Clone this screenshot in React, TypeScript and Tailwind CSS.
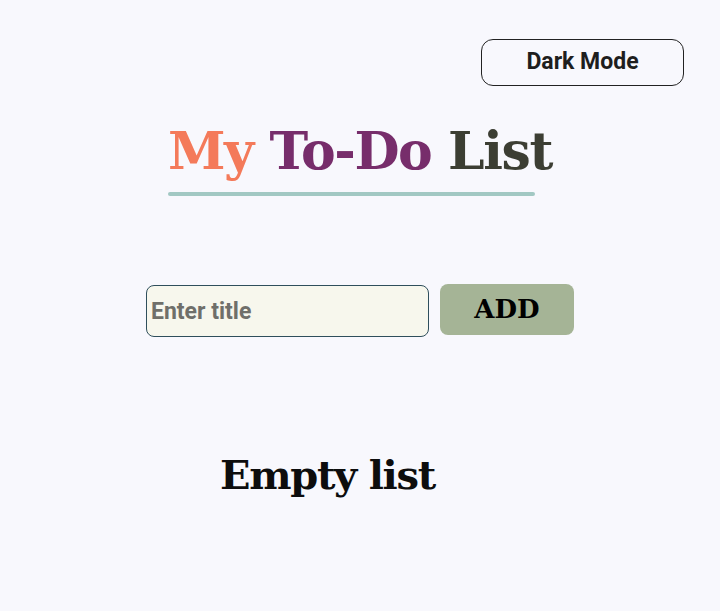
export default function App() {
  return (
    <div className="min-h-[611px] w-full bg-[#f8f8fd] flex flex-col">
      <div className="flex justify-end pt-[39px] pr-[36px]">
        <button className="w-[203px] h-[47px] rounded-[12px] border border-[#222] bg-transparent text-[23px] font-bold text-[#1e1e1e] font-['Roboto',sans-serif]">
          Dark Mode
        </button>
      </div>
      <div className="flex flex-col items-center mt-[34px]">
        <div className="flex flex-col items-start">
          <h1 className="font-['DejaVu_Serif',serif] font-bold text-[52px] leading-[62px] tracking-[-1.4px] whitespace-nowrap">
            <span className="text-[#f47a5a]">My</span>{" "}
            <span className="text-[#772d6b]">To-Do</span>{" "}
            <span className="text-[#3c3e33]">List</span>
          </h1>
          <div className="h-[4px] w-[367px] rounded-full bg-[#a2c8c3] mt-[10px]" />
        </div>
      </div>
      <div className="flex justify-center items-start gap-[11px] mt-[89px]">
        <input
          placeholder="Enter title"
          className="w-[283px] h-[52px] rounded-[8px] border border-[#2f4f5c] bg-[#f7f7ed] px-[4px] text-[23px] font-bold font-['Roboto',sans-serif] placeholder:text-[#6f6f6a] outline-none"
        />
        <button className="-mt-[1px] w-[134px] h-[51px] rounded-[8px] bg-[#a5b496] text-[26px] font-bold text-black font-['DejaVu_Serif',serif]">
          ADD
        </button>
      </div>
      <div className="pl-[220px] mt-[108px]">
        <h2 className="font-['DejaVu_Serif',serif] font-bold text-[40px] leading-[60px] tracking-[-1.3px] text-[#0d0d0d]">
          Empty list
        </h2>
      </div>
    </div>
  );
}
